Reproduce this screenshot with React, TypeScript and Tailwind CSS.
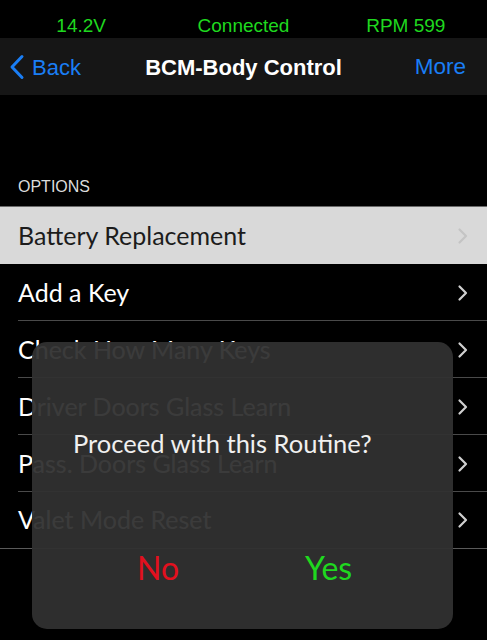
import React from "react";

const rows = [
  "Add a Key",
  "Check How Many Keys",
  "Driver Doors Glass Learn",
  "Pass. Doors Glass Learn",
  "Valet Mode Reset",
];

function Chevron({ className }: { className: string }) {
  return (
    <svg width="12" height="18" viewBox="0 0 12 18" className={className}>
      <path d="M2.5 2.5 L9 9 L2.5 15.5" fill="none" stroke="currentColor" strokeWidth="2.2" strokeLinecap="round" strokeLinejoin="round" />
    </svg>
  );
}

export default function App() {
  return (
    <div className="relative h-[640px] w-[487px] overflow-hidden bg-black">
      {/* status */}
      <div className="grid h-[38px] grid-cols-3 items-center pt-[12px] text-center font-['Liberation_Sans',Arial,sans-serif] text-[19px] text-[#1fd81f]">
        <span>14.2V</span>
        <span>Connected</span>
        <span>RPM 599</span>
      </div>

      {/* nav */}
      <div className="relative flex h-[57px] items-center justify-between bg-[#161616] pl-[9px] pr-[21px] pt-px font-['Liberation_Sans',Arial,sans-serif]">
        <div className="flex items-center gap-[7px] text-[22px] text-[#1a7ef5]">
          <svg width="16" height="26" viewBox="0 0 16 26">
            <path d="M13 2.5 L3 13 L13 23.5" fill="none" stroke="currentColor" strokeWidth="3" strokeLinecap="round" strokeLinejoin="round" />
          </svg>
          <span>Back</span>
        </div>
        <span className="absolute left-1/2 -translate-x-1/2 text-[22px] font-bold text-white">BCM-Body Control</span>
        <span className="text-[22.5px] text-[#1a7ef5]">More</span>
      </div>

      {/* section */}
      <div className="flex h-[111px] items-end pb-[7px] pl-[18px] font-['Liberation_Sans',Arial,sans-serif] text-[16px] text-[#dcdcdc]">
        OPTIONS
      </div>

      <div className="border-t border-[#6a6a6a] font-['Lato',sans-serif] text-[25px]">
        <div className="flex h-[57px] items-center justify-between bg-[#d9d9d9] pl-[18px] pr-[18px] text-[#1c1c1c]">
          <span>Battery Replacement</span>
          <Chevron className="text-[#c4c4c4]" />
        </div>
        {rows.map((r, i) => (
          <div
            key={r}
            className={`flex h-[57px] items-center justify-between pr-[18px] text-white ${
              i === rows.length - 1 ? "border-b border-[#5a5a5a]" : ""
            }`}
          >
            <span className="pl-[18px]">{r}</span>
            <Chevron className="text-[#d0d0d0]" />
          </div>
        ))}
      </div>
      {/* separators between rows */}
      <div className="pointer-events-none absolute left-[18px] right-0 top-[264px] flex flex-col">
        {[0, 1, 2, 3].map((n) => (
          <div key={n} className="mt-[56px] h-px bg-[#4a4a4a]" />
        ))}
      </div>

      {/* dialog */}
      <div className="absolute left-[32px] top-[342px] flex h-[287px] w-[421px] flex-col rounded-[15px] bg-[#303030]/95 font-['Lato',sans-serif]">
        <div className="mt-[86px] pl-[41px] text-[25.5px] leading-[30px] text-[#f0f0f0]">Proceed with this Routine?</div>
        <div className="mt-[91px] flex text-[32px] leading-[38px]">
          <span className="w-[273px] pl-[105px] text-[#e3101e]">No</span>
          <span className="text-[#1fd81f]">Yes</span>
        </div>
      </div>
    </div>
  );
}
